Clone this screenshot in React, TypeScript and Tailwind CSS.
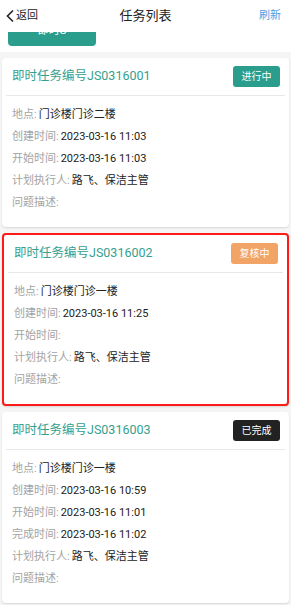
import React from 'react';

type Task = {
  id: string;
  status: string;
  statusClass: string;
  selected?: boolean;
  fields: { label: string; value: string }[];
};

const tasks: Task[] = [
  {
    id: 'JS0316001',
    status: '进行中',
    statusClass: 'bg-[#2a9d8c]',
    fields: [
      { label: '地点', value: '门诊楼门诊二楼' },
      { label: '创建时间', value: '2023-03-16 11:03' },
      { label: '开始时间', value: '2023-03-16 11:03' },
      { label: '计划执行人', value: '路飞、保洁主管' },
      { label: '问题描述', value: '' },
    ],
  },
  {
    id: 'JS0316002',
    status: '复核中',
    statusClass: 'bg-[#f2a366]',
    selected: true,
    fields: [
      { label: '地点', value: '门诊楼门诊一楼' },
      { label: '创建时间', value: '2023-03-16 11:25' },
      { label: '开始时间', value: '' },
      { label: '计划执行人', value: '路飞、保洁主管' },
      { label: '问题描述', value: '' },
    ],
  },
  {
    id: 'JS0316003',
    status: '已完成',
    statusClass: 'bg-[#222222]',
    fields: [
      { label: '地点', value: '门诊楼门诊一楼' },
      { label: '创建时间', value: '2023-03-16 10:59' },
      { label: '开始时间', value: '2023-03-16 11:01' },
      { label: '完成时间', value: '2023-03-16 11:02' },
      { label: '计划执行人', value: '路飞、保洁主管' },
      { label: '问题描述', value: '' },
    ],
  },
];

const font = { fontFamily: 'Roboto, "Noto Sans CJK SC", sans-serif' };

const TaskCard = ({ task }: { task: Task }) => (
  <div
    className={`mx-[2px] mb-[6px] rounded-[4px] bg-white shadow-[0_1px_2px_rgba(0,0,0,0.12)] ${
      task.selected ? 'border-2 border-[#ff1a1a]' : ''
    }`}
  >
    <div className="mx-[4px] flex h-[38px] items-center justify-between border-b border-[#e8e8e8] pl-[6px] pr-[5px]">
      <span className="text-[12.5px] text-[#36a08e]">即时任务编号{task.id}</span>
      <span
        className={`flex h-[21px] w-[47px] items-center justify-center rounded-[3px] text-[10px] text-white ${task.statusClass}`}
      >
        {task.status}
      </span>
    </div>
    <div className="px-[10px] pb-[13px] pt-[8px]">
      {task.fields.map((f) => (
        <div key={f.label} className="flex h-[22px] items-center text-[11px]">
          <span className="text-[#a3a3a3]">{f.label}:</span>
          {f.value && <span className="ml-[2px] text-[#222]">{f.value}</span>}
        </div>
      ))}
    </div>
  </div>
);

export default function App() {
  return (
    <div className="h-[605px] w-[291px] overflow-hidden bg-[#f5f5f5]" style={font}>
      {/* Header */}
      <div className="relative z-10 flex h-[32px] items-center justify-between bg-white px-[5px]">
        <div className="flex items-center text-[11px] text-[#222]">
          <svg width="10" height="14" viewBox="0 0 10 14" fill="none" className="mr-[1px]">
            <path d="M8 1.5L2.5 7L8 12.5" stroke="#222" strokeWidth="1.6" />
          </svg>
          返回
        </div>
        <span className="absolute left-1/2 -translate-x-1/2 text-[13px] text-[#222]">任务列表</span>
        <span className="mr-[5px] text-[11px] text-[#4a9fe3]">刷新</span>
      </div>

      {/* Partially scrolled-away action button */}
      <div className="h-[20px] overflow-hidden bg-white px-[8px]">
        <div className="mt-[-16px] flex h-[30px] w-[88px] items-center justify-center rounded-[4px] bg-[#2a9d8c] text-[11px] text-white">
          即时S
        </div>
      </div>

      <div className="pt-[6px]">
        {tasks.map((t) => (
          <TaskCard key={t.id} task={t} />
        ))}
      </div>
    </div>
  );
}
